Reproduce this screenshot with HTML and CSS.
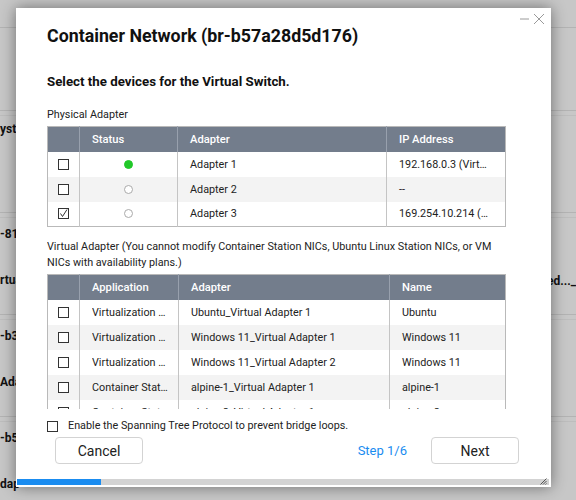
FILE: index.html
```html
<!DOCTYPE html>
<html lang="en">
<head>
    <meta charset="UTF-8">
    <title>Container Network</title>
    <link rel="stylesheet" href="styles.css">
</head>
<body>
    <!-- network list behind the dialog -->
    <div class="page">
        <div class="toolbar"></div>
        <div class="row row-head"></div>
        <div class="row row-top">
            <div class="cell-name"><b class="first">ystem</b></div>
        </div>
        <div class="row">
            <div class="cell-name"><b class="first">-81c</b><b class="second">rtual</b></div>
            <div class="cell-state"><b>ed..._</b></div>
        </div>
        <div class="row">
            <div class="cell-name"><b class="first">-b3e</b><b class="second">Adapt</b></div>
        </div>
        <div class="row">
            <div class="cell-name"><b class="first">-b57</b><b class="second">dap</b></div>
        </div>
    </div>

    <div class="dialog">
        <div class="win-ctrl">
            <svg width="26" height="12" viewBox="0 0 26 12">
                <line x1="0" y1="6" x2="9" y2="6" stroke="#9a9a9a" stroke-width="1"/>
                <line x1="14" y1="1" x2="24" y2="11" stroke="#9a9a9a" stroke-width="1"/>
                <line x1="24" y1="1" x2="14" y2="11" stroke="#9a9a9a" stroke-width="1"/>
            </svg>
        </div>

        <h1 class="dialog-title">Container Network (br-b57a28d5d176)</h1>

        <div class="scroller">
            <h2 class="step-title">Select the devices for the Virtual Switch.</h2>

            <p class="caption">Physical Adapter</p>
            <table class="grid grid-phys">
                <thead>
                    <tr><th></th><th>Status</th><th>Adapter</th><th>IP Address</th></tr>
                </thead>
                <tbody>
                    <tr>
                        <td class="chk"><span class="box"></span></td>
                        <td class="stat"><span class="dot on"></span></td>
                        <td>Adapter 1</td>
                        <td class="ip"><span class="cut">192.168.0.3 (Virtual Switch 1)</span></td>
                    </tr>
                    <tr>
                        <td class="chk"><span class="box"></span></td>
                        <td class="stat"><span class="dot"></span></td>
                        <td>Adapter 2</td>
                        <td class="ip">--</td>
                    </tr>
                    <tr>
                        <td class="chk">
                            <svg class="box-checked" width="11" height="11" viewBox="0 0 11 11">
                                <rect x="0.5" y="0.5" width="10" height="10" fill="#fff" stroke="#333"/>
                                <polyline points="2.5,5.5 4.5,8.5 9,1.5" fill="none" stroke="#333" stroke-width="1"/>
                            </svg>
                        </td>
                        <td class="stat"><span class="dot"></span></td>
                        <td>Adapter 3</td>
                        <td class="ip"><span class="cut">169.254.10.214 (Virtual Switch 1)</span></td>
                    </tr>
                </tbody>
            </table>

            <p class="caption note">Virtual Adapter (You cannot modify Container Station NICs, Ubuntu Linux Station NICs, or VM NICs with availability plans.)</p>
            <table class="grid grid-virt">
                <thead>
                    <tr><th></th><th>Application</th><th>Adapter</th><th>Name</th></tr>
                </thead>
                <tbody>
                    <tr>
                        <td class="chk"><span class="box"></span></td>
                        <td><span class="cut">Virtualization Station</span></td>
                        <td>Ubuntu_Virtual Adapter 1</td>
                        <td>Ubuntu</td>
                    </tr>
                    <tr>
                        <td class="chk"><span class="box"></span></td>
                        <td><span class="cut">Virtualization Station</span></td>
                        <td>Windows 11_Virtual Adapter 1</td>
                        <td>Windows 11</td>
                    </tr>
                    <tr>
                        <td class="chk"><span class="box"></span></td>
                        <td><span class="cut">Virtualization Station</span></td>
                        <td>Windows 11_Virtual Adapter 2</td>
                        <td>Windows 11</td>
                    </tr>
                    <tr>
                        <td class="chk"><span class="box"></span></td>
                        <td><span class="cut">Container Station</span></td>
                        <td>alpine-1_Virtual Adapter 1</td>
                        <td>alpine-1</td>
                    </tr>
                    <tr>
                        <td class="chk"><span class="box"></span></td>
                        <td><span class="cut">Container Station</span></td>
                        <td>alpine-2_Virtual Adapter 1</td>
                        <td>alpine-2</td>
                    </tr>
                    <tr>
                        <td class="chk"><span class="box"></span></td>
                        <td><span class="cut">Container Station</span></td>
                        <td>nginx-1_Virtual Adapter 1</td>
                        <td>nginx-1</td>
                    </tr>
                </tbody>
            </table>
        </div>

        <label class="option">
            <span class="box"></span>
            <span>Enable the Spanning Tree Protocol to prevent bridge loops.</span>
        </label>

        <div class="footer">
            <button class="btn">Cancel</button>
            <span class="step">Step 1/6</span>
            <button class="btn">Next</button>
        </div>

        <div class="progress"><div class="progress-fill" style="width: 84px"></div></div>

        <svg class="grip" width="7" height="7" viewBox="0 0 7 7">
            <line x1="0.5" y1="6.5" x2="6.5" y2="0.5" stroke="#555"/>
            <line x1="3" y1="6.5" x2="6.5" y2="3" stroke="#555"/>
            <line x1="5.5" y1="6.5" x2="6.5" y2="5.5" stroke="#555"/>
        </svg>
    </div>
</body>
</html>
```

FILE: styles.css
```css
*{
    box-sizing: border-box;
}
body{
    margin: 0;
    width: 576px;
    height: 500px;
    overflow: hidden;
    background-color: #c7c7c7;
    font-family: Roboto, "Liberation Sans", sans-serif;
    color: #222;
    position: relative;
}

/* list behind the dialog */
.page{
    display: flex;
    flex-direction: column;
}
.toolbar{
    height: 27px;
}
.row{
    display: flex;
    height: 102px;
    border-top: 1px solid #b3b3b3;
    background: linear-gradient(#bdbdbd, #bdbdbd) 0 4px / 100% 1px no-repeat;
    font-size: 12px;
    color: #111;
}
.row-head{
    height: 83px;
    background: none;
}
.cell-name{
    width: 552px;
    display: flex;
    flex-direction: column;
    padding-top: 14px;
}
.row-top .cell-name{
    padding-top: 11px;
}
.cell-name b{
    display: block;
    line-height: 14px;
}
.cell-name .second{
    margin-top: 32px;
}
.cell-state{
    padding-top: 61px;
}

/* dialog */
.dialog{
    position: absolute;
    left: 16px;
    top: 8px;
    width: 535px;
    height: 479px;
    background: #fff;
    box-shadow: 0 0 14px rgba(0, 0, 0, .45);
    display: flex;
    flex-direction: column;
    padding-top: 16px;
    padding-bottom: 2px;
}
.win-ctrl{
    position: absolute;
    right: 5px;
    top: 5px;
    line-height: 0;
}
.dialog-title{
    margin: 0 0 25px 31px;
    font-size: 17.8px;
    line-height: 24px;
    font-weight: 700;
    color: #111;
}
.scroller{
    margin-left: 31px;
    margin-right: 33px;
    height: 336px;
    overflow-y: scroll;
    overflow-x: hidden;
    flex-shrink: 0;
}
.scroller::-webkit-scrollbar{
    width: 13px;
}
.scroller::-webkit-scrollbar-track{
    background: #f5f5f5;
    border-left: 1px solid #e0e0e0;
    border-right: 1px solid #e0e0e0;
}
.scroller::-webkit-scrollbar-thumb{
    background: #f5f5f5;
}
.step-title{
    margin: 0;
    font-size: 13.3px;
    line-height: 18px;
    font-weight: 700;
    color: #111;
}
.caption{
    margin: 16px 0 3px;
    font-size: 10.8px;
    line-height: 16px;
}
.note{
    width: 448px;
    margin-top: 12px;
    margin-bottom: 3px;
}

.grid{
    width: 459px;
    border-collapse: collapse;
    table-layout: fixed;
    font-size: 10.8px;
    border: 1px solid #b9b9b9;
}
.grid th{
    height: 25px;
    background: #737d8c;
    color: #fff;
    font-size: 11.2px;
    font-weight: 500;
    text-align: left;
    padding: 0 12px;
    border-left: 1px solid #98a0ad;
}
.grid td{
    height: 25px;
    padding: 0 10px 0 12px;
    border-left: 1px solid #c4c4c4;
    white-space: nowrap;
    overflow: hidden;
}
.grid td.ip{
    padding-right: 16px;
}
.grid th:first-child, .grid td:first-child{
    border-left: none;
}
.grid tbody tr:nth-child(even){
    background: #f3f3f3;
}
.grid-phys th:nth-child(1){
    width: 32px;
}
.grid-phys th:nth-child(2){
    width: 98px;
}
.grid-phys th:nth-child(3){
    width: 209px;
}
.grid-virt th:nth-child(1){
    width: 32px;
}
.grid-virt th:nth-child(2){
    width: 99px;
}
.grid-virt th:nth-child(3){
    width: 211px;
}
.cut{
    display: block;
    overflow: hidden;
    text-overflow: ellipsis;
}
.grid td.chk, .grid td.stat{
    padding: 0;
    text-align: center;
    line-height: 0;
}
.box{
    display: inline-block;
    width: 11px;
    height: 11px;
    border: 1px solid #333;
    background: #fff;
    vertical-align: middle;
}
.dot{
    display: inline-block;
    width: 9px;
    height: 9px;
    border-radius: 50%;
    border: 1px solid #aaa;
    background: #fff;
}
.dot.on{
    background: #21c829;
    border-color: #21c829;
}

.option{
    margin: 10px 0 0 31px;
    display: flex;
    align-items: center;
    gap: 10px;
    font-size: 10.8px;
    line-height: 14px;
}
.footer{
    margin: 4px 32px 0 39px;
    display: flex;
    align-items: center;
}
.btn{
    width: 88px;
    height: 27px;
    background: #fff;
    border: 1px solid #d3d3d3;
    border-radius: 4px;
    font-family: inherit;
    font-size: 14px;
    color: #222;
    padding: 0;
}
.step{
    margin-left: auto;
    margin-right: 24px;
    font-size: 13px;
    color: #1a8cf0;
}
.progress{
    margin-top: auto;
    margin-left: 1px;
    margin-right: 2px;
    height: 6px;
    background: #d3d3d3;
}
.progress-fill{
    height: 100%;
    background: #1a8cf0;
}
.grip{
    position: absolute;
    right: 4px;
    bottom: 2px;
}
```
